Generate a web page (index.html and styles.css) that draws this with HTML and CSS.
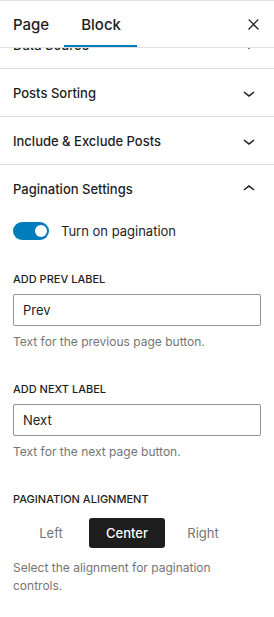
FILE: index.html
```html
<!DOCTYPE html>
<html>
<head>
  <title>Block Settings</title>
  <link rel="stylesheet" href="styles.css">
</head>
<body>
  <div class="sidebar">
    <div class="header">
      <div class="tabs">
        <button class="tab">Page</button>
        <button class="tab active">Block</button>
      </div>
      <button class="close-btn" aria-label="Close">
        <svg viewBox="0 0 24 24" width="17" height="17"><path d="M13 11.8l6.1-6.3-1-1-6.1 6.2-6.1-6.2-1 1 6.1 6.3-6.5 6.7 1 1 6.5-6.6 6.5 6.6 1-1z"/></svg>
      </button>
    </div>

    <div class="panels">
      <div class="panel first">
        <div class="panel-title">
          <span>Data Source</span>
          <svg viewBox="0 0 24 24" width="24" height="24"><path d="M17.5 11.6L12 16l-5.5-4.4.9-1.2L12 14l4.6-3.6 1 1.2z"/></svg>
        </div>
      </div>

      <div class="panel">
        <div class="panel-title">
          <span>Posts Sorting</span>
          <svg viewBox="0 0 24 24" width="24" height="24"><path d="M17.5 11.6L12 16l-5.5-4.4.9-1.2L12 14l4.6-3.6 1 1.2z"/></svg>
        </div>
      </div>

      <div class="panel">
        <div class="panel-title">
          <span>Include &amp; Exclude Posts</span>
          <svg viewBox="0 0 24 24" width="24" height="24"><path d="M17.5 11.6L12 16l-5.5-4.4.9-1.2L12 14l4.6-3.6 1 1.2z"/></svg>
        </div>
      </div>

      <div class="panel open">
        <div class="panel-title">
          <span>Pagination Settings</span>
          <svg viewBox="0 0 24 24" width="24" height="24"><path d="M6.5 12.4L12 8l5.5 4.4-.9 1.2L12 10l-4.6 3.6-1-1.2z"/></svg>
        </div>

        <div class="panel-body">
          <div class="toggle-row">
            <span class="toggle on"><span class="thumb"></span></span>
            <span class="toggle-label">Turn on pagination</span>
          </div>

          <div class="control">
            <label class="control-label" for="prev-label">Add prev label</label>
            <input class="text-input" type="text" id="prev-label" value="Prev">
            <p class="help">Text for the previous page button.</p>
          </div>

          <div class="control">
            <label class="control-label" for="next-label">Add next label</label>
            <input class="text-input" type="text" id="next-label" value="Next">
            <p class="help">Text for the next page button.</p>
          </div>

          <div class="control">
            <span class="control-label">Pagination alignment</span>
            <div class="segmented">
              <button class="segment">Left</button>
              <button class="segment active">Center</button>
              <button class="segment">Right</button>
            </div>
            <p class="help">Select the alignment for pagination controls.</p>
          </div>
        </div>
      </div>
    </div>
  </div>
</body>
</html>
```

FILE: styles.css
```css
body {
  margin: 0;
  padding: 0;
  font-family: Inter, "Noto Sans", Arial, sans-serif;
  background-color: #fff;
  color: #1e1e1e;
}

button {
  font-family: inherit;
  border: none;
  background: none;
  padding: 0;
  cursor: pointer;
  color: inherit;
}

.sidebar {
  height: 617px;
  display: flex;
  flex-direction: column;
  overflow: hidden;
}

.header {
  display: flex;
  justify-content: space-between;
  align-items: center;
  height: 46px;
  border-top: 1px solid #e0e0e0;
  border-bottom: 1px solid #e0e0e0;
  padding: 0 12px 0 13px;
  position: relative;
  z-index: 1;
  background-color: #fff;
}

.tabs {
  display: flex;
  gap: 32px;
  height: 100%;
}

.tab {
  position: relative;
  font-size: 15px;
  font-weight: 500;
  height: 100%;
  color: #1e1e1e;
}

.tab.active::after {
  content: "";
  position: absolute;
  left: -17px;
  right: -16px;
  bottom: 0;
  height: 2px;
  background-color: #007cba;
}

.close-btn {
  display: flex;
  align-items: center;
  justify-content: center;
  width: 17px;
  height: 17px;
}

.close-btn svg,
.panel-title svg {
  fill: #1e1e1e;
}

.close-btn svg path {
  stroke: #1e1e1e;
  stroke-width: 0.4;
}

.panels {
  flex: 1;
  overflow: hidden;
}

.panel {
  border-bottom: 1px solid #e0e0e0;
}

.panel.first {
  margin-top: -27px;
}

.panel-title {
  display: flex;
  justify-content: space-between;
  align-items: center;
  height: 47px;
  padding: 0 13px;
  font-size: 13px;
  font-weight: 500;
}

.panel.open {
  border-bottom: none;
}

.panel-body {
  padding: 10px 13px 0;
}

.toggle-row {
  display: flex;
  align-items: center;
  gap: 12px;
  height: 18px;
  margin-bottom: 31px;
}

.toggle {
  position: relative;
  width: 36px;
  height: 18px;
  border-radius: 9px;
  background-color: #007cba;
  display: inline-block;
}

.toggle .thumb {
  position: absolute;
  top: 3px;
  right: 2px;
  width: 12px;
  height: 12px;
  border-radius: 50%;
  background-color: #fff;
}

.toggle-label {
  font-size: 13px;
}

.control {
  margin-bottom: 30px;
}

.control-label {
  display: block;
  font-size: 11px;
  font-weight: 500;
  text-transform: uppercase;
  line-height: 16px;
  margin-bottom: 7px;
}

.text-input {
  display: block;
  box-sizing: border-box;
  width: 100%;
  height: 32px;
  margin: 0;
  padding: 0 9px;
  border: 1px solid #949494;
  border-radius: 2px;
  font-family: inherit;
  font-size: 13px;
  color: #1e1e1e;
  outline: none;
}

.help {
  margin: 7px 0 0;
  font-size: 12px;
  line-height: 18px;
  color: #757575;
}

.segmented {
  display: flex;
  margin-top: 11px;
  height: 30px;
}

.segment {
  width: 76px;
  height: 30px;
  border-radius: 3px;
  font-size: 13px;
  color: #757575;
}

.segment.active {
  background-color: #1e1e1e;
  color: #fff;
  font-weight: 500;
}

.segmented + .help {
  margin-top: 11px;
  padding-right: 40px;
}
```
